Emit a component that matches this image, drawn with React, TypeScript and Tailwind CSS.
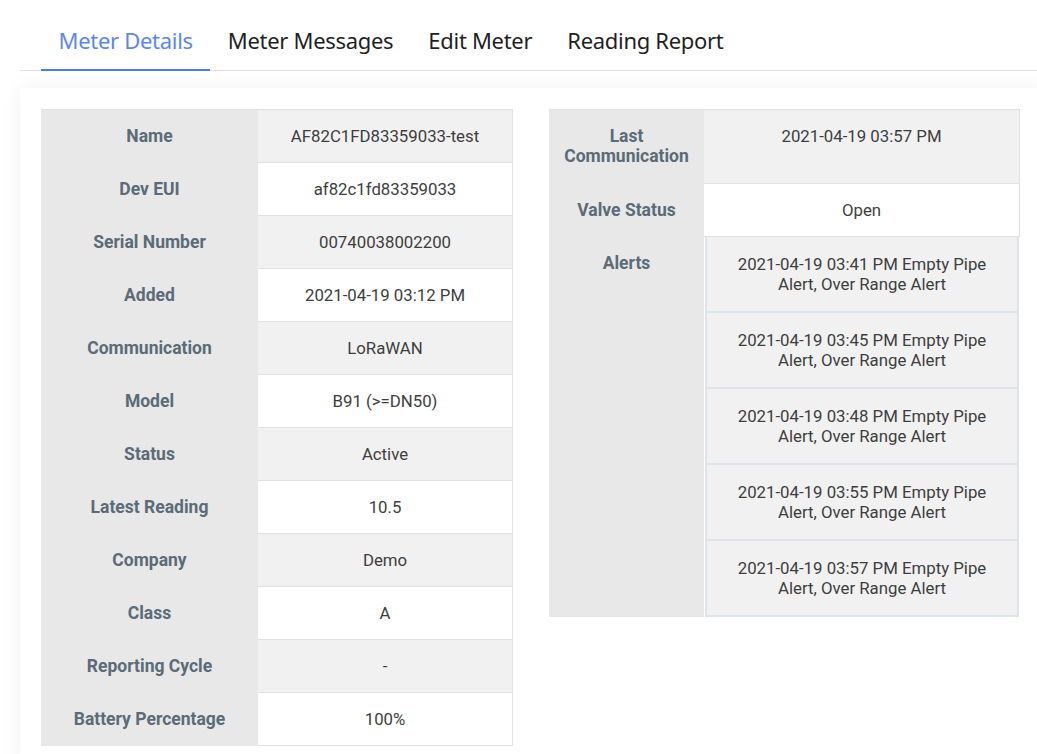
import React from "react";

// ── Data ──────────────────────────────────────────────────────────────────────

const TABS = ["Meter Details", "Meter Messages", "Edit Meter", "Reading Report"];

const DETAILS: { label: string; value: string }[] = [
  { label: "Name", value: "AF82C1FD83359033-test" },
  { label: "Dev EUI", value: "af82c1fd83359033" },
  { label: "Serial Number", value: "00740038002200" },
  { label: "Added", value: "2021-04-19 03:12 PM" },
  { label: "Communication", value: "LoRaWAN" },
  { label: "Model", value: "B91 (>=DN50)" },
  { label: "Status", value: "Active" },
  { label: "Latest Reading", value: "10.5" },
  { label: "Company", value: "Demo" },
  { label: "Class", value: "A" },
  { label: "Reporting Cycle", value: "-" },
  { label: "Battery Percentage", value: "100%" },
];

const ALERTS = [
  "2021-04-19 03:41 PM Empty Pipe Alert, Over Range Alert",
  "2021-04-19 03:45 PM Empty Pipe Alert, Over Range Alert",
  "2021-04-19 03:48 PM Empty Pipe Alert, Over Range Alert",
  "2021-04-19 03:55 PM Empty Pipe Alert, Over Range Alert",
  "2021-04-19 03:57 PM Empty Pipe Alert, Over Range Alert",
];

const LABEL = "bg-[#e8e8e8] px-2 py-4 text-center font-bold text-[17.5px] leading-5 text-[#5b6b77]";
const VALUE = "border-r border-b border-[#dfe1e7] px-4 py-4 text-center text-[16.8px] leading-5 text-[#3e3e3e]";

// ── Component ─────────────────────────────────────────────────────────────────

export default function App() {
  return (
    <div className="min-h-screen bg-white overflow-hidden font-['Roboto',sans-serif]">
      {/* Tabs */}
      <div className="ml-[20px] flex h-[71px] items-stretch border-b border-[#e1e1e8] pl-[21px]">
        {TABS.map((t, i) => (
          <div
            key={t}
            className={`flex items-center px-[17.5px] pt-[11px] text-[22px] font-['Noto_Sans',sans-serif] tracking-[-0.3px] ${
              i === 0 ? "border-b-2 border-[#4a7af3] text-[#5a86f4] -mb-[1px]" : "text-[#1f1f1f]"
            }`}
          >
            {t}
          </div>
        ))}
      </div>

      {/* Card */}
      <div className="ml-[20px] mt-[17px] w-[1030px] bg-white p-[21px] shadow-[0_0_18px_rgba(0,0,0,0.06)]">
        <div className="flex items-start gap-[36px]">
          {/* Left table */}
          <div className="w-[472px] border-t border-[#dfe1e7]">
            {DETAILS.map((d, i) => (
              <div key={d.label} className="grid grid-cols-[217px_1fr]">
                <div className={`${LABEL} h-[53px]`}>{d.label}</div>
                <div className={`${VALUE} h-[53px] ${i % 2 === 0 ? "bg-[#f1f1f1]" : "bg-white"}`}>{d.value}</div>
              </div>
            ))}
          </div>

          {/* Right table */}
          <div className="w-[471px] border-t border-[#dfe1e7]">
            <div className="grid grid-cols-[155px_1fr]">
              <div className={`${LABEL} h-[74px]`}>Last Communication</div>
              <div className={`${VALUE} h-[74px] bg-[#f1f1f1]`}>2021-04-19 03:57 PM</div>
            </div>
            <div className="grid grid-cols-[155px_1fr]">
              <div className={`${LABEL} h-[53px]`}>Valve Status</div>
              <div className={`${VALUE} h-[53px] bg-white`}>Open</div>
            </div>
            <div className="grid grid-cols-[155px_1fr]">
              <div className={LABEL}>Alerts</div>
              <div className="px-[1px]">
                {ALERTS.map((a, i) => (
                  <div
                    key={i}
                    className="h-[76px] border-x-2 border-b-2 border-[#dfe3ea] bg-[#f1f1f1] px-4 pt-[17px] text-center text-[16.8px] leading-5 text-[#3e3e3e]"
                  >
                    {a}
                  </div>
                ))}
              </div>
            </div>
          </div>
        </div>
      </div>
    </div>
  );
}
